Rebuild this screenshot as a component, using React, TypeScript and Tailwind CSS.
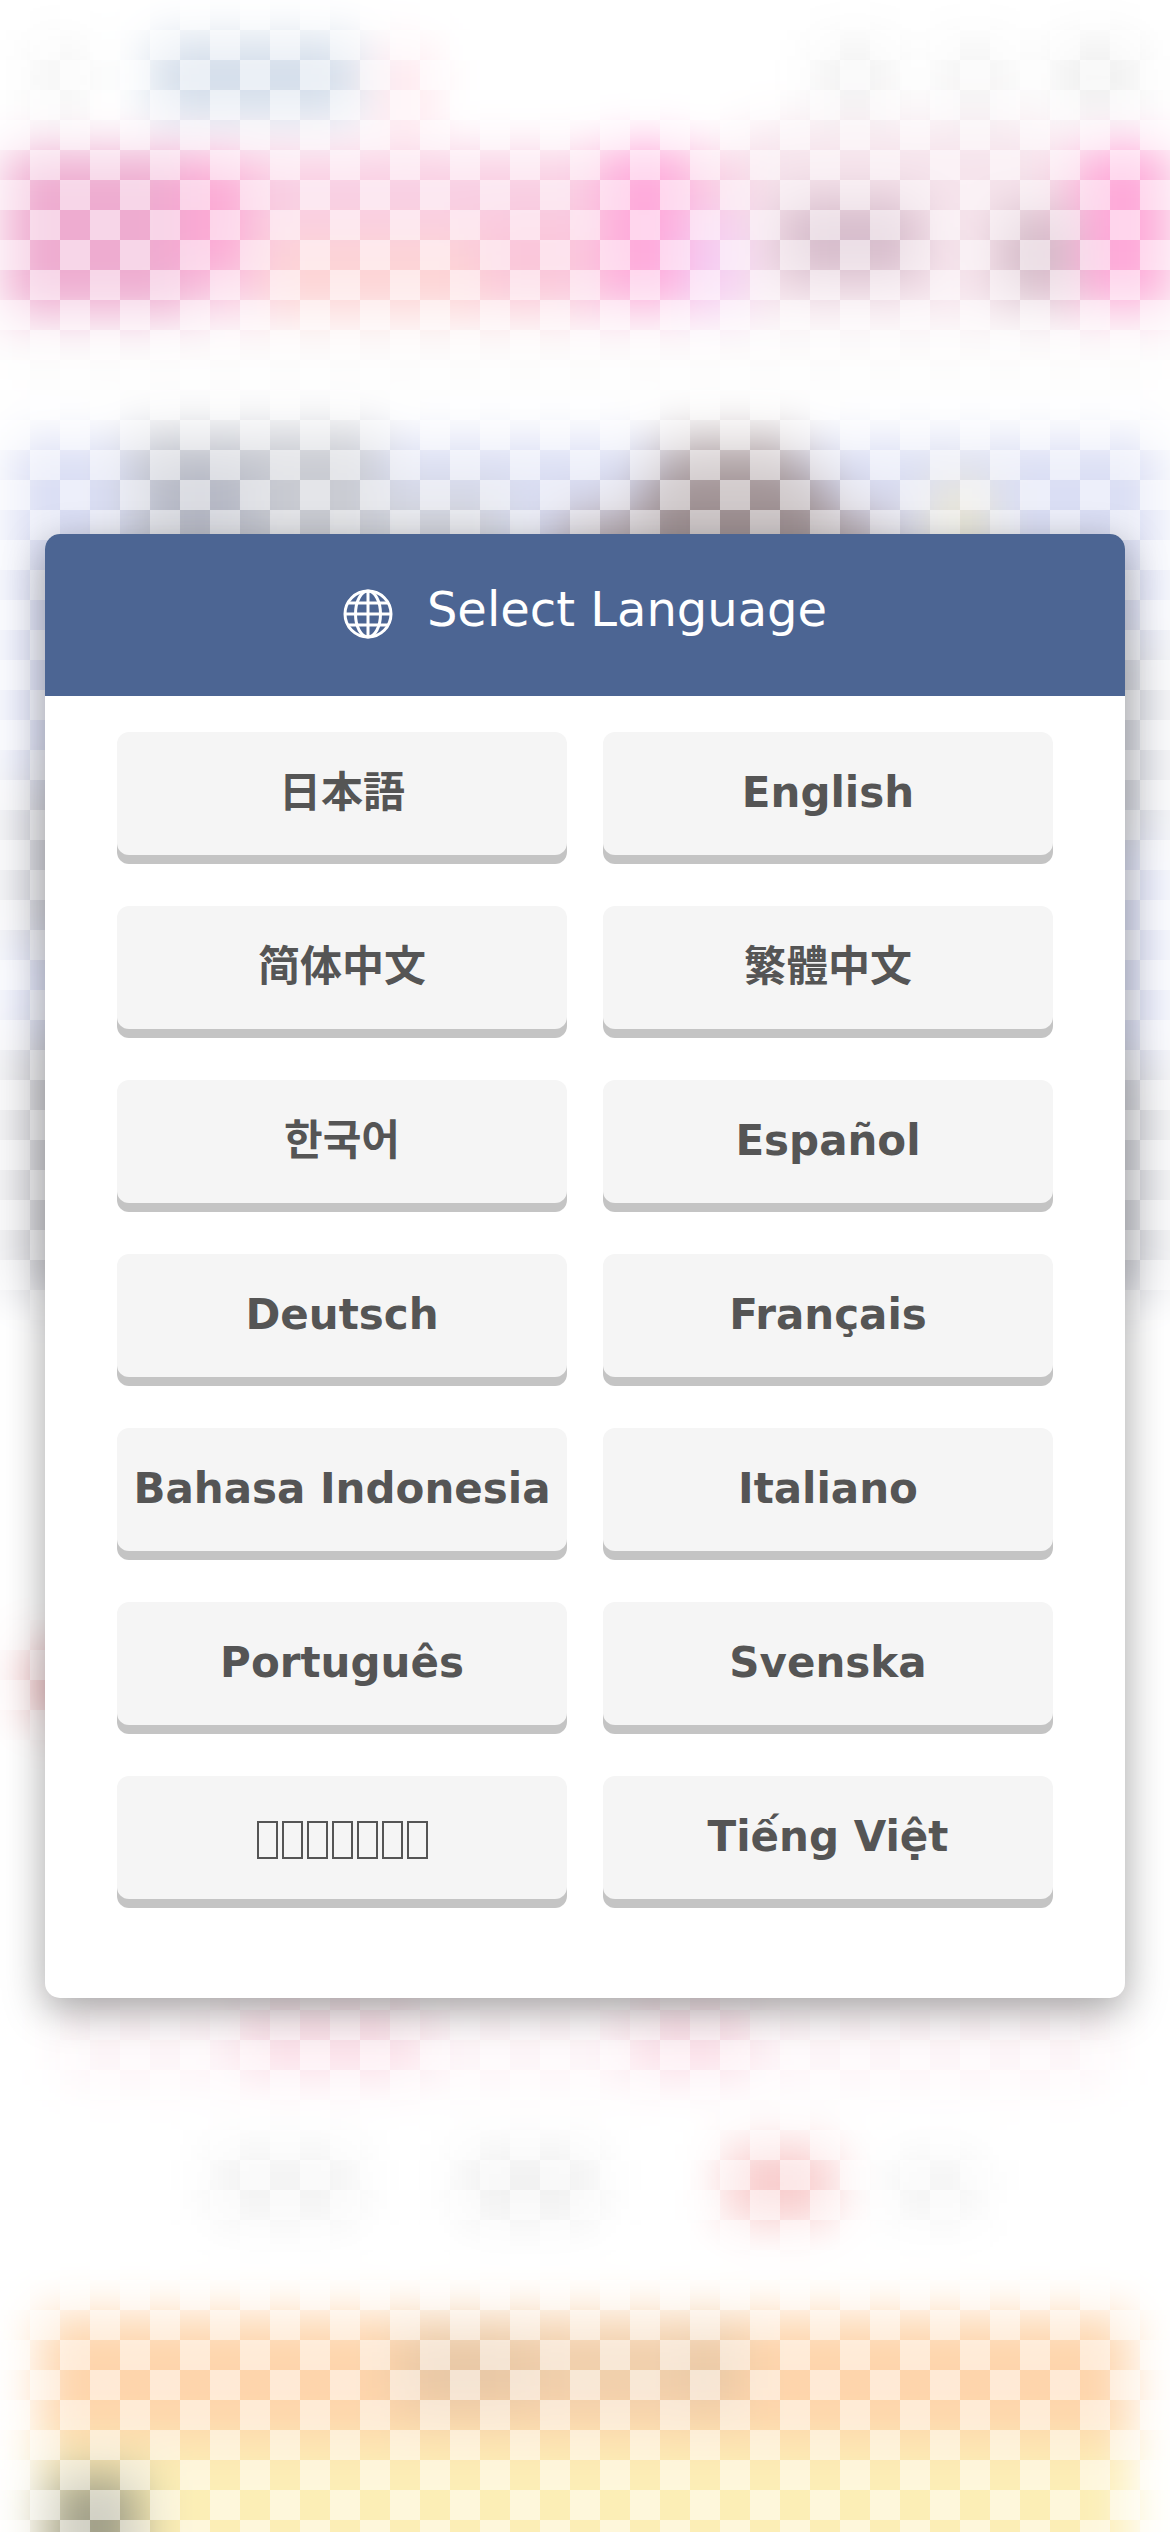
type Blob = [x: number, y: number, w: number, h: number, color: string];

const languages = [
  "日本語",
  "English",
  "简体中文",
  "繁體中文",
  "한국어",
  "Español",
  "Deutsch",
  "Français",
  "Bahasa Indonesia",
  "Italiano",
  "Português",
  "Svenska",
  "ภาษาไทย",
  "Tiếng Việt",
];

const blobs: Blob[] = [
  // top bar
  [30, 40, 60, 80, "#f5f5f5"],
  [150, 38, 210, 80, "#d3ddea"],
  [375, 45, 60, 90, "#ffe8ee"],
  [815, 40, 80, 75, "#f2f2f2"],
  [940, 40, 70, 75, "#f3f3f3"],
  [1055, 40, 85, 75, "#efefef"],
  // pink banner
  [0, 150, 1180, 165, "#f9cfe3"],
  [10, 150, 180, 165, "#eeacd0"],
  [180, 160, 65, 115, "#fca8d4"],
  [265, 235, 300, 80, "#fdd4d5"],
  [480, 220, 110, 80, "#fac6da"],
  [605, 145, 80, 155, "#ffa8da"],
  [680, 215, 70, 95, "#f5cef3"],
  [745, 125, 310, 190, "#f6e4ec"],
  [780, 200, 140, 80, "#d6bccb"],
  [1000, 210, 75, 90, "#d4bbc8"],
  [1085, 145, 75, 155, "#ffa6d8"],
  [0, 330, 1170, 50, "#fbfafa"],
  // character art
  [12, 440, 1146, 855, "#dadef4"],
  [130, 430, 250, 140, "#c9cbd2"],
  [150, 465, 100, 80, "#b4b7c4"],
  [370, 490, 140, 80, "#d2d4dc"],
  [560, 510, 330, 60, "#b8acb0"],
  [660, 435, 140, 60, "#b9adb0"],
  [640, 475, 190, 100, "#9e9092"],
  [930, 480, 60, 90, "#ece8d4"],
  [12, 780, 90, 160, "#d2d3db"],
  [12, 1040, 90, 250, "#cfcfd4"],
  [1080, 640, 78, 200, "#d5d7df"],
  [1080, 1060, 78, 230, "#d0d1d7"],
  // lower part
  [25, 1645, 60, 75, "#f1bfc2"],
  [60, 2000, 1050, 85, "#fdf4f7"],
  [240, 2000, 180, 75, "#fbdfe8"],
  [630, 2000, 120, 75, "#fbdfe8"],
  [210, 2145, 150, 80, "#f3f3f3"],
  [460, 2145, 140, 80, "#f1f1f1"],
  [725, 2145, 110, 78, "#f8cbcb"],
  [890, 2155, 90, 65, "#f3f3f3"],
  // footer banners
  [40, 2315, 1090, 125, "#fed5ac"],
  [400, 2330, 160, 80, "#e8c8a6"],
  [660, 2330, 80, 80, "#e8c8a6"],
  [530, 2330, 160, 80, "#f0cfac"],
  [40, 2440, 1090, 140, "#fceeb6"],
  [50, 2475, 90, 110, "#9f9e88"],
];

const Background = () => {
  return (
    <div className="absolute inset-0 overflow-hidden">
      <svg width="1170" height="2532" viewBox="0 0 1170 2532">
        <defs>
          <filter
            id="soft"
            filterUnits="userSpaceOnUse"
            x="-100"
            y="-100"
            width="1370"
            height="2732"
            colorInterpolationFilters="sRGB"
          >
            <feGaussianBlur stdDeviation="24" />
          </filter>
        </defs>
        <g filter="url(#soft)">
          <rect x="-100" y="-100" width="1370" height="2732" fill="white" />
          {blobs.map(([x, y, w, h, color]) => (
            <rect key={`${x}-${y}`} x={x} y={y} width={w} height={h} fill={color} />
          ))}
        </g>
      </svg>
      <div className="absolute inset-0 bg-[repeating-conic-gradient(transparent_0_25%,rgba(255,255,255,0.5)_0_50%)] bg-[length:60px_60px]" />
    </div>
  );
};

const GlobeIcon = () => {
  return (
    <svg className="mt-[7px] size-[50px]" viewBox="0 0 50 50" fill="none" stroke="white" strokeWidth="3">
      <circle cx="25" cy="25" r="23" />
      <ellipse cx="25" cy="25" rx="12.5" ry="23" />
      <path d="M25 2v46M2 25h46M5.500 14h39M5.500 36h39" />
    </svg>
  );
};

// one empty box per letter, for scripts without a glyph
const MissingGlyphs = ({ text }: { text: string }) => {
  return (
    <span className="flex justify-center gap-[4px] pt-[8px]" aria-label={text}>
      {[...text].map((_, i) => (
        <span key={i} className="h-[38px] w-[21px] border-2 border-[#555]" />
      ))}
    </span>
  );
};

const App = () => {
  return (
    <div className="relative flex h-[2532px] w-[1170px] items-center justify-center overflow-hidden bg-white font-['DejaVu_Sans','Noto_Sans_CJK_JP',sans-serif]">
      <Background />
      <div className="relative h-[1464px] w-[1080px] rounded-[15px] bg-white shadow-[0_12px_40px_rgba(0,0,0,0.36)]">
        <div className="flex h-[162px] items-center justify-center gap-[34px] rounded-t-[15px] bg-[#4c6593] pb-[9px] text-[48px] text-white">
          <GlobeIcon />
          <h1 className="pb-[3px]">Select Language</h1>
        </div>
        <div className="grid grid-cols-2 gap-x-9 gap-y-[51px] px-[72px] pt-9">
          {languages.map((language) => (
            <button
              key={language}
              className="h-[123px] rounded-xl bg-[#f5f5f5] pb-[3px] text-[42px] font-bold whitespace-nowrap text-[#555] shadow-[0_9px_0_#c4c4c4]"
            >
              {language === "ภาษาไทย" ? <MissingGlyphs text={language} /> : language}
            </button>
          ))}
        </div>
      </div>
    </div>
  );
};

export default App;
